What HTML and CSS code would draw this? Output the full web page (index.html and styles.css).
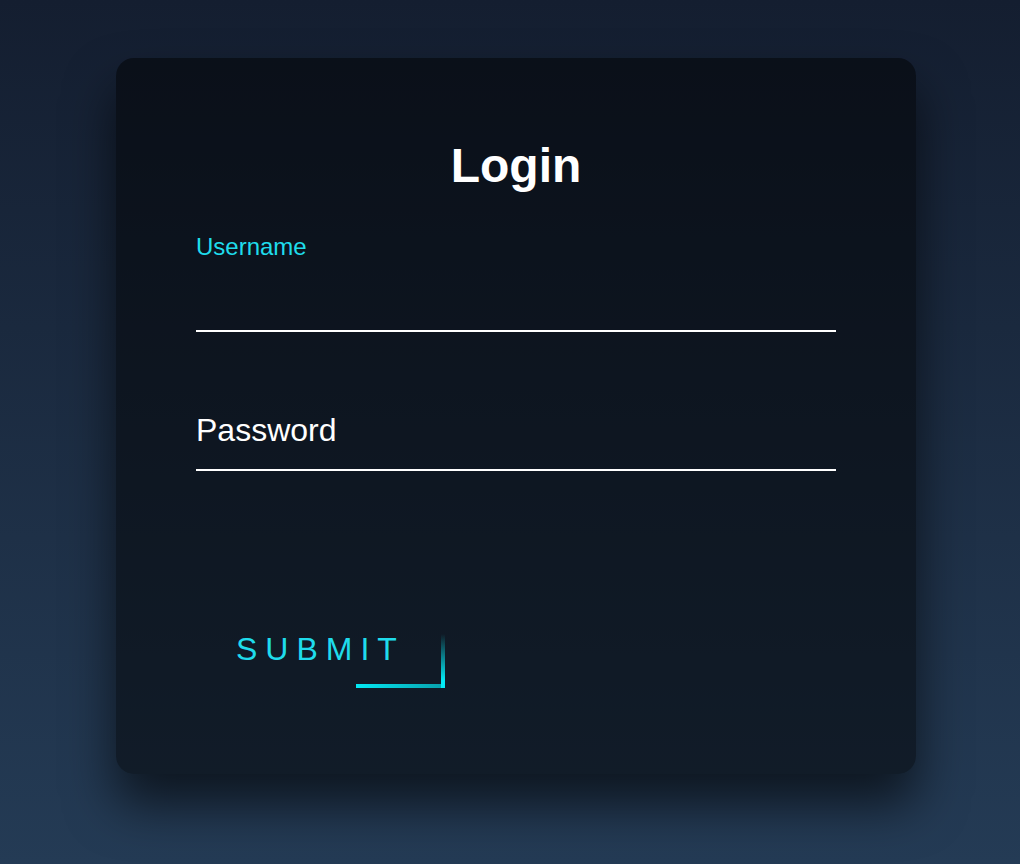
FILE: index.html
```html
<!DOCTYPE html>
<html lang="en">
<head>
    <meta charset="UTF-8">
    <meta name="viewport" content="width=device-width, initial-scale=1.0">
    <title>Login</title>
    <link rel="stylesheet" href="styles.css">
</head>
<body>
<div class="login-box">
    <h2>Login</h2>
    <form>
        <div class="user-box">
            <input type="text" name="username" required>
            <label class="filled">Username</label>
        </div>
        <div class="user-box">
            <input type="password" name="password" required>
            <label>Password</label>
        </div>
        <a href="#" class="submit">
            <span></span>
            <span></span>
            <span></span>
            <span></span>
            Submit
        </a>
    </form>
</div>
</body>
</html>
```

FILE: styles.css
```css
html {
    height: 100%;
}

body {
    margin: 0;
    padding: 58px 0 0 12px;
    min-height: 100vh;
    box-sizing: border-box;
    display: flex;
    justify-content: center;
    align-items: flex-start;
    font-family: "Liberation Sans", Arial, sans-serif;
    background: linear-gradient(#141e30, #243b55);
}

.login-box {
    width: 800px;
    padding: 80px 80px 82px;
    box-sizing: border-box;
    background: rgba(0, 0, 0, .5);
    box-shadow: 0 30px 50px rgba(0, 0, 0, .6);
    border-radius: 18px;
}

.login-box h2 {
    margin: 0 0 60px;
    padding: 0;
    color: #fff;
    font-size: 48px;
    text-align: center;
}

.user-box {
    position: relative;
}

.user-box input {
    width: 100%;
    padding: 20px 0;
    font-size: 32px;
    font-family: inherit;
    color: #fff;
    margin-bottom: 60px;
    border: none;
    border-bottom: 2px solid #fff;
    outline: none;
    background: transparent;
    display: block;
}

.user-box label {
    position: absolute;
    top: 0;
    left: 0;
    padding: 20px 0;
    font-size: 32px;
    color: #fff;
    pointer-events: none;
}

.user-box label.filled {
    top: -40px;
    font-size: 24px;
    color: #1fdcec;
}

.submit {
    position: relative;
    display: inline-block;
    padding: 20px 40px;
    margin-top: 80px;
    color: #1fdcec;
    font-size: 32px;
    text-decoration: none;
    text-transform: uppercase;
    letter-spacing: 8px;
    overflow: hidden;
}

.submit span {
    position: absolute;
    display: block;
}

.submit span:nth-child(1) {
    top: 0;
    left: -100%;
    width: 100%;
    height: 4px;
    background: linear-gradient(90deg, transparent, #03e9f4);
}

.submit span:nth-child(2) {
    top: 30%;
    right: 0;
    width: 4px;
    height: 100%;
    background: linear-gradient(180deg, transparent, #03e9f4 60%);
}

.submit span:nth-child(3) {
    bottom: 0;
    left: 160px;
    width: 100%;
    height: 4px;
    background: linear-gradient(270deg, transparent, #03e9f4);
}

.submit span:nth-child(4) {
    bottom: -100%;
    left: 0;
    width: 4px;
    height: 100%;
    background: linear-gradient(360deg, transparent, #03e9f4);
}
```
